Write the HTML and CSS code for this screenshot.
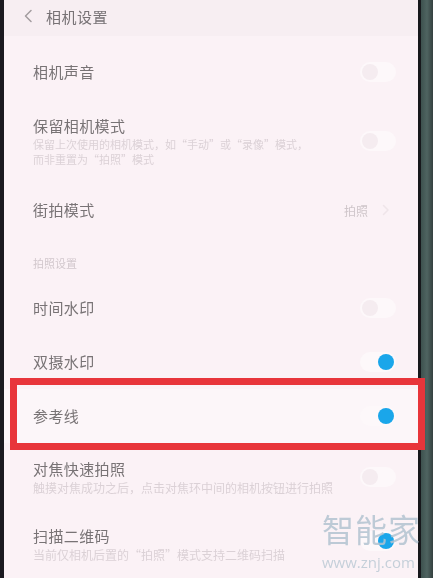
FILE: index.html
```html
<!DOCTYPE html>
<html lang="zh">
<head>
<meta charset="utf-8">
<title>相机设置</title>
<link rel="stylesheet" href="styles.css">
</head>
<body>
<div class="frame">
  <div class="bezel-left"></div>
  <div class="screen">
    <header class="topbar">
      <svg class="back" width="10" height="14" viewBox="0 0 10 14"><path d="M8 1.5 L2.5 7 L8 12.5" fill="none" stroke="#a29c9f" stroke-width="1.5" stroke-linecap="round" stroke-linejoin="round"/></svg>
      <span class="title">相机设置</span>
    </header>
    <main class="list">
      <div class="row h54">
        <div class="text"><div class="label">相机声音</div></div>
        <span class="switch"><span class="knob"></span></span>
      </div>
      <div class="row h84">
        <div class="text">
          <div class="label">保留相机模式</div>
          <div class="sub narrow">保留上次使用的相机模式，如“手动”或“录像”模式，<br>而非重置为“拍照”模式</div>
        </div>
        <span class="switch"><span class="knob"></span></span>
      </div>
      <div class="row h54">
        <div class="text"><div class="label">街拍模式</div></div>
        <span class="value">拍照</span>
        <svg class="chev" width="8" height="12" viewBox="0 0 8 12"><path d="M1.5 1.5 L6 6 L1.5 10.5" fill="none" stroke="#efe5e9" stroke-width="1.6" stroke-linecap="round" stroke-linejoin="round"/></svg>
      </div>
      <div class="section">拍照设置</div>
      <div class="row h54">
        <div class="text"><div class="label">时间水印</div></div>
        <span class="switch"><span class="knob"></span></span>
      </div>
      <div class="row h54">
        <div class="text"><div class="label">双摄水印</div></div>
        <span class="switch on"><span class="knob"></span></span>
      </div>
      <div class="row h54 marked">
        <div class="text"><div class="label">参考线</div></div>
        <span class="switch on"><span class="knob"></span></span>
      </div>
      <div class="row h67">
        <div class="text">
          <div class="label">对焦快速拍照</div>
          <div class="sub">触摸对焦成功之后，点击对焦环中间的相机按钮进行拍照</div>
        </div>
        <span class="switch"><span class="knob"></span></span>
      </div>
      <div class="row h68">
        <div class="text">
          <div class="label">扫描二维码</div>
          <div class="sub">当前仅相机后置的“拍照”模式支持二维码扫描</div>
        </div>
        <span class="switch on low"><span class="knob"></span></span>
      </div>
    </main>
  </div>
  <div class="bezel-right"><span class="edge"></span><span class="side"></span></div>
  <span class="mark"></span>
  <div class="watermark">
    <div class="wm-big">智能家</div>
    <div class="wm-small">www.znj.com</div>
  </div>
</div>
</body>
</html>
```
FILE: styles.css
```css
* { box-sizing: border-box; }
html, body { margin: 0; padding: 0; }
body {
  width: 433px;
  height: 578px;
  overflow: hidden;
  background: #2c3a38;
  font-family: "Noto Sans CJK SC", "Noto Sans", sans-serif;
}
.frame {
  position: relative;
  display: flex;
  width: 433px;
  height: 578px;
}
.bezel-left {
  width: 4px;
  background: #1b1a20;
}
.screen {
  width: 414px;
  height: 578px;
  background: #fbf2f6;
  display: flex;
  flex-direction: column;
  overflow: hidden;
  filter: blur(0.6px);
}
.bezel-right {
  flex: 1;
  display: flex;
}
.bezel-right .edge { width: 3px; background: #17181c; }
.bezel-right .side { flex: 1; background: linear-gradient(90deg, #3d514e, #4f6461 50%, #34403f); }

.topbar {
  height: 36px;
  flex: none;
  display: flex;
  align-items: center;
  padding-left: 19px;
  background: #f7eef2;
}
.back { margin-right: 13px; margin-top: -4px; }
.title {
  font-size: 15px;
  color: #777275;
  margin-top: -4px;
  letter-spacing: 0.5px;
}
.list {
  padding-top: 9px;
  display: flex;
  flex-direction: column;
}
.row {
  display: flex;
  align-items: center;
  padding-left: 29px;
  padding-right: 22px;
}
.h54 { height: 54px; }
.h84 { height: 84px; }
.h67 { height: 67px; }
.h68 { height: 68px; }
.text { flex: 1; min-width: 0; }
.label {
  font-size: 15px;
  line-height: 20px;
  color: #787375;
  letter-spacing: 0.4px;
}
.sub {
  font-size: 12px;
  line-height: 15px;
  color: #dbd1d6;
  margin-top: 1px;
  white-space: nowrap;
}
.sub.narrow { font-size: 11px; }
.section {
  height: 44px;
  padding-top: 18px;
  padding-left: 29px;
  font-size: 11px;
  line-height: 16px;
  color: #d2c8cd;
  flex: none;
}
.value {
  font-size: 12px;
  color: #cfc6ca;
  margin-right: 14px;
}
.chev { margin-right: 6px; }

.switch {
  width: 36px;
  height: 20px;
  border-radius: 10px;
  background: #fdf8fa;
  display: flex;
  align-items: center;
  padding: 0 2px;
  flex: none;
}
.knob {
  width: 16px;
  height: 16px;
  border-radius: 50%;
  background: #f5ecf0;
}
.switch.on { justify-content: flex-end; }
.switch.on .knob { background: #1aa6ea; }
.switch.low { margin-top: -6px; }

.marked { background: #fcf6f9; }
.mark {
  position: absolute;
  left: 10px;
  top: 378px;
  width: 415px;
  height: 72px;
  border: 7px solid #e8353b;
}

.watermark {
  position: absolute;
  left: 322px;
  top: 510px;
  opacity: 0.85;
  pointer-events: none;
}
.wm-big {
  font-size: 32px;
  line-height: 36px;
  letter-spacing: 1px;
  color: #b3c4d1;
}
.wm-small {
  font-family: "Open Sans", "Noto Sans", sans-serif;
  font-size: 15px;
  line-height: 18px;
  margin-top: 7px;
  color: #bccad5;
}
```
